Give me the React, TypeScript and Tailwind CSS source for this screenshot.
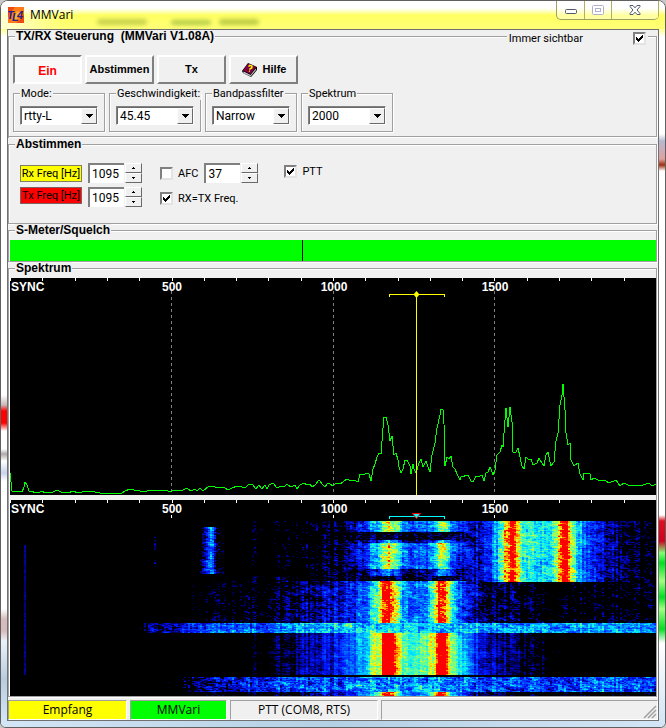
import { useEffect, useRef, useState } from "react";
import type { ReactNode } from "react";

type Profile = [number, number][];

interface Segment {
  from: number;
  to: number;
  noise: number;
  profile: Profile;
}

const PLOT_WIDTH = 646;
const FALL_HEIGHT = 175;

const spectrumPoints =
  "0,195 2,213 7,213 12,214 14,209 15,204 17,207 19,213 28,215 32,213 35,215 43,214 47,212 51,214 57,215 64,213 67,215 72,214 81,213 85,214 90,215 112,215 115,213 120,211 124,212 130,213 134,214 140,212 147,212 150,213 155,212 158,213 162,213 165,212 168,213 173,212 177,210 181,213 185,211 187,213 190,210 193,213 199,208 205,209 212,209 215,210 218,212 222,210 227,208 232,209 235,210 238,207 242,206 246,211 249,207 252,211 255,207 257,211 259,207 263,205 267,210 271,208 275,208 277,206 281,209 285,207 287,211 290,207 294,205 297,207 300,206 302,209 305,207 309,202 313,207 315,209 318,205 320,206 323,208 326,205 330,206 337,201 341,203 344,202 348,204 350,196 354,197 356,195 359,196 361,203 363,191 365,186 367,179 369,175 371,176 373,150 373,139 376,139 378,147 380,163 382,158 384,177 386,175 388,182 389,189 391,195 393,191 395,182 397,182 400,188 401,196 403,186 404,191 406,195 409,185 411,181 413,189 416,183 418,189 420,194 422,177 425,165 427,150 430,137 431,131 433,132 434,146 435,188 437,179 439,181 441,178 443,189 445,191 447,196 450,202 451,199 458,197 461,203 463,204 466,198 468,199 472,197 474,203 476,195 478,194 480,189 481,191 483,197 485,192 487,177 490,174 492,167 493,169 495,142 496,130 498,149 500,129 502,144 503,174 506,174 508,170 510,179 512,188 514,191 516,179 519,182 521,181 523,187 527,185 529,180 532,185 534,188 536,177 538,174 540,184 541,188 544,184 546,163 548,155 550,127 552,117 553,106 555,132 556,155 558,167 560,165 561,182 564,188 568,185 570,196 573,202 574,195 580,196 581,202 584,200 590,203 595,202 599,205 606,202 610,208 614,205 618,207 633,207 639,205 642,208 646,206";

const idle: Profile = [[240, 0], [300, 0.04], [350, 0.08], [400, 0.1], [450, 0.14], [475, 0.16], [485, 0]];
const weakPair: Profile = [[240, 0], [290, 0.04], [330, 0.1], [350, 0.26], [362, 0.45], [370, 0.66], [376, 0.82], [382, 0.74], [392, 0.5], [400, 0.4], [410, 0.42], [420, 0.46], [426, 0.68], [431, 0.86], [435, 0.74], [440, 0.5], [447, 0.36], [455, 0.25], [475, 0.25], [485, 0]];
const fadingPair: Profile = [[300, 0.05], [350, 0.14], [367, 0.3], [376, 0.5], [385, 0.35], [400, 0.16], [420, 0.2], [427, 0.4], [431, 0.62], [436, 0.45], [445, 0.2], [475, 0.16], [485, 0]];
const strongPair: Profile = [[180, 0], [240, 0.06], [290, 0.13], [310, 0.21], [330, 0.27], [345, 0.3], [355, 0.43], [363, 0.62], [369, 0.84], [373, 1.02], [378, 1.02], [384, 0.84], [390, 0.58], [400, 0.46], [412, 0.42], [420, 0.62], [424, 0.8], [428, 1.02], [433, 1.02], [438, 0.78], [445, 0.5], [455, 0.28], [470, 0.18], [495, 0.13], [515, 0.05], [646, 0.04]];
const sustainedPair: Profile = [[240, 0.03], [275, 0.11], [290, 0.2], [320, 0.28], [340, 0.4], [355, 0.54], [363, 0.74], [370, 0.84], [373, 1.1], [381, 1.1], [386, 0.8], [395, 0.66], [405, 0.67], [418, 0.73], [424, 0.86], [427, 1.1], [434, 1.1], [438, 0.82], [446, 0.64], [455, 0.48], [465, 0.34], [480, 0.24], [500, 0.15], [520, 0.09], [545, 0.04], [565, 0], [646, 0]];
const upperBand: Profile = [[125, 0], [140, 0.12], [165, 0.26], [200, 0.38], [260, 0.45], [300, 0.54], [370, 0.57], [470, 0.5], [646, 0.45]];
const lowerBand: Profile = [[155, 0], [170, 0.06], [200, 0.2], [260, 0.36], [330, 0.4], [370, 0.5], [430, 0.5], [470, 0.38], [560, 0.37], [580, 0.44], [646, 0.35]];
const rightPair: Profile = [[450, 0.1], [468, 0.26], [480, 0.38], [487, 0.54], [491, 0.7], [496, 0.88], [499, 0.96], [503, 0.96], [507, 0.8], [514, 0.62], [530, 0.58], [540, 0.62], [546, 0.76], [550, 0.95], [553, 1.06], [557, 1], [561, 0.74], [568, 0.54], [574, 0.42], [582, 0.31], [595, 0.22], [610, 0.12], [625, 0.09], [646, 0.03]];

const segments: Segment[] = [
  { from: 0, to: 11, noise: 0.24, profile: weakPair },
  { from: 11, to: 19, noise: 0.24, profile: idle },
  { from: 19, to: 22, noise: 0.24, profile: fadingPair },
  { from: 22, to: 48, noise: 0.24, profile: weakPair },
  { from: 48, to: 55, noise: 0.24, profile: fadingPair },
  { from: 55, to: 60, noise: 0.24, profile: idle },
  { from: 0, to: 61, noise: 0.22, profile: rightPair },
  { from: 60, to: 102, noise: 0.24, profile: strongPair },
  { from: 102, to: 112, noise: 0.26, profile: upperBand },
  { from: 112, to: 154, noise: 0.15, profile: sustainedPair },
  { from: 156, to: 171, noise: 0.32, profile: lowerBand },
  { from: 171, to: 175, noise: 0.2, profile: strongPair },
  { from: 6, to: 53, noise: 0.26, profile: [[189, 0], [192, 0.2], [196, 0.3], [200, 0.48], [203, 0.3], [205, 0.05], [213, 0.04], [214, 0]] },
  { from: 12, to: 46, noise: 0.3, profile: [[142, 0], [143, 0.1], [145, 0]] },
  { from: 24, to: 154, noise: 0.05, profile: [[13, 0], [14, 0.17], [15, 0.17], [16, 0]] },
];

const heatStops: [number, number[]][] = [
  [0.08, [0, 0, 0]],
  [0.18, [0, 0, 130]],
  [0.3, [0, 20, 255]],
  [0.44, [0, 110, 255]],
  [0.58, [0, 235, 255]],
  [0.7, [110, 255, 140]],
  [0.82, [255, 250, 0]],
  [0.91, [255, 140, 0]],
  [0.96, [255, 0, 0]],
];

function heat(v: number): number[] {
  if (v <= heatStops[0][0]) return heatStops[0][1];
  for (let i = 1; i < heatStops.length; i++) {
    const [end, color] = heatStops[i];
    const [start, prev] = heatStops[i - 1];
    if (v <= end) {
      const t = (v - start) / (end - start);
      return color.map((c, k) => Math.round(prev[k] + (c - prev[k]) * t));
    }
  }
  return heatStops[heatStops.length - 1][1];
}

function sample(profile: Profile, x: number): number {
  if (x < profile[0][0] || x > profile[profile.length - 1][0]) return 0;
  for (let i = 1; i < profile.length; i++) {
    const [x1, v1] = profile[i];
    const [x0, v0] = profile[i - 1];
    if (x <= x1) return v0 + ((v1 - v0) * (x - x0)) / (x1 - x0);
  }
  return 0;
}

function Waterfall() {
  const ref = useRef<HTMLCanvasElement>(null);

  useEffect(() => {
    const ctx = ref.current?.getContext("2d");
    if (!ctx) return;
    let seed = 4711;
    const rnd = () => {
      seed = (seed * 1664525 + 1013904223) >>> 0;
      return seed / 4294967296 - 0.5;
    };
    const columnGain = Array.from({ length: PLOT_WIDTH }, () => rnd() * 0.13);
    const above = Array.from({ length: PLOT_WIDTH }, () => 0);
    ctx.fillStyle = "#000";
    ctx.fillRect(0, 0, PLOT_WIDTH, FALL_HEIGHT);
    for (let y = 0; y < FALL_HEIGHT; y++) {
      const rowGain = rnd() * 0.05;
      let left = 0;
      for (let x = 0; x < PLOT_WIDTH; x += 2) {
        // neighbouring bins share part of their noise
        const n = rnd() + left * 0.35 + above[x] * 0.35;
        left = n;
        above[x] = n;
        let best = 0;
        for (const s of segments) {
          if (y < s.from || y >= s.to) continue;
          const base = sample(s.profile, x);
          if (base <= 0) continue;
          const v = base + n * s.noise * 0.8 + columnGain[x] + rowGain;
          if (v > best) best = v;
        }
        const [r, g, b] = heat(best);
        ctx.fillStyle = `rgb(${r},${g},${b})`;
        ctx.fillRect(x, y, 2, 1);
      }
    }
  }, []);

  return <canvas ref={ref} width={PLOT_WIDTH} height={FALL_HEIGHT} className="block w-full" />;
}

function Scale() {
  const ticks = Array.from({ length: 20 }, (_, i) => Math.round(i * 32.3));
  return (
    <g>
      {ticks.map((x) => (
        <rect key={x} x={x} y="0" width="1" height="3" fill="#fff" />
      ))}
      <g fill="#fff" fontSize="12" fontWeight="bold" fontFamily="'Liberation Sans', Arial, sans-serif">
        <text x="1" y="13">SYNC</text>
        <text x="162" y="13" textAnchor="middle">500</text>
        <text x="324" y="13" textAnchor="middle">1000</text>
        <text x="485" y="13" textAnchor="middle">1500</text>
      </g>
    </g>
  );
}

function SpectrumPlot() {
  return (
    <svg viewBox="0 0 646 217" className="block w-full bg-black">
      <Scale />
      <g stroke="#808080" strokeDasharray="3 3" shapeRendering="crispEdges">
        <path d="M161.5 13V214" />
        <path d="M323.5 13V214" />
        <path d="M484.5 13V214" />
      </g>
      <polyline points={spectrumPoints} fill="none" stroke="#00ff00" shapeRendering="crispEdges" />
      <g stroke="#ffff00" fill="none" shapeRendering="crispEdges">
        <path d="M379.5 19V16.5H434.5V19" />
        <path d="M406.5 14V217" />
      </g>
      <path d="M406.5 13l3 3.5l-3 3.5l-3-3.5z" fill="#ffff00" />
    </svg>
  );
}

function WaterfallScale() {
  return (
    <svg viewBox="0 0 646 21" className="block w-full bg-black">
      <Scale />
      <path d="M161.5 15v3M323.5 15v3M484.5 15v3" stroke="#fff" shapeRendering="crispEdges" />
      <path d="M379.5 19V16.5H434.5V19" fill="none" stroke="#00ffff" shapeRendering="crispEdges" />
      <path d="M402.500 13.500h8l-4 5z" fill="#00ffff" stroke="#ff0000" />
    </svg>
  );
}

function Group({ title, className, children }: { title: string; className: string; children: ReactNode }) {
  return (
    <fieldset className="relative mr-px min-w-0 border border-[#a0a0a0] shadow-[1px_1px_0_#fff,inset_1px_1px_0_#fff]">
      <legend className="ml-[6px] whitespace-pre bg-[#f0f0f0] px-px font-['Liberation_Sans',Arial,sans-serif] text-[12px] font-bold leading-[13px]">
        {title}
      </legend>
      <div className={className}>{children}</div>
    </fieldset>
  );
}

function Combo({ label, options }: { label: string; options: string[] }) {
  return (
    <fieldset className="w-[92px] min-w-0 border border-[#a0a0a0] shadow-[1px_1px_0_#fff,inset_1px_1px_0_#fff]">
      <legend className="ml-[6px] whitespace-nowrap bg-[#f0f0f0] px-px leading-[13px]">{label}</legend>
      <div className="relative m-[6px] h-[19px] border border-b-white border-l-[#808080] border-r-white border-t-[#808080] bg-white">
        <select
          aria-label={label}
          className="block h-full w-full appearance-none border-l border-t border-[#696969] bg-white pl-[2px] text-[12px] leading-[14px] outline-none"
        >
          {options.map((o) => (
            <option key={o}>{o}</option>
          ))}
        </select>
        <span className="pointer-events-none absolute bottom-0 right-0 top-px flex w-4 items-center justify-center border border-b-[#696969] border-l-white border-r-[#696969] border-t-white bg-[#f0f0f0]">
          <svg width="7" height="4" shapeRendering="crispEdges">
            <path d="M0 0h7L3.500 4z" />
          </svg>
        </span>
      </div>
    </fieldset>
  );
}

function Spinner({ label, initial }: { label: string; initial: number }) {
  const [value, setValue] = useState(initial);
  const step =
    "flex h-[10px] w-[17px] items-center justify-center border border-b-[#696969] border-l-white border-r-[#696969] border-t-white bg-[#f0f0f0]";
  return (
    <div className="flex h-5 gap-px">
      <input
        aria-label={label}
        value={value}
        onChange={(e) => setValue(Number(e.target.value) || 0)}
        className="h-5 w-9 border-l-2 border-t-2 border-[#808080] bg-white pl-[2px] text-[12px] leading-[14px] outline-none"
      />
      <div className="flex flex-col">
        <button type="button" aria-label={`${label} +`} onClick={() => setValue(value + 1)} className={step}>
          <svg width="3" height="2" shapeRendering="crispEdges">
            <path d="M1 0h1v1h1v1H0V1h1z" />
          </svg>
        </button>
        <button type="button" aria-label={`${label} -`} onClick={() => setValue(value - 1)} className={step}>
          <svg width="3" height="2" shapeRendering="crispEdges">
            <path d="M0 0h3v1H2v1H1V1H0z" />
          </svg>
        </button>
      </div>
    </div>
  );
}

function Check({ label, checked, reversed }: { label: string; checked?: boolean; reversed?: boolean }) {
  return (
    <label className={`flex items-center whitespace-nowrap leading-[13px] ${reversed ? "flex-row-reverse gap-[50px]" : "gap-[5px]"}`}>
      <span className="relative block h-[13px] w-[13px]">
        <input
          type="checkbox"
          defaultChecked={checked}
          className="peer block h-[13px] w-[13px] appearance-none border-2 border-b-[#e3e3e3] border-l-[#808080] border-r-[#e3e3e3] border-t-[#808080] bg-white"
        />
        <svg
          viewBox="0 0 13 13"
          className="pointer-events-none absolute inset-0 hidden peer-checked:block"
          shapeRendering="crispEdges"
        >
          <path d="M3 5h1v1h1v1h1V6h1V5h1V4h1V3h1v3H9v1H8v1H7v1H6v1H5V9H4V8H3z" />
        </svg>
      </span>
      {label}
    </label>
  );
}

function HelpBook() {
  return (
    <svg width="17" height="16" viewBox="0 0 17 16">
      <path d="M1 9L7 1l9 4v3l-6 7-8-4z" fill="#000" />
      <path d="M2 8.500L7.200 1.500 15 5l-5.500 7z" fill="#800040" />
      <path d="M2.500 9.500l7 3.600L15 6.600v1.200L9.700 14.200 2.500 11z" fill="#fff" />
      <path d="M3 10.700l6.500 3 5.500-6.500" fill="none" stroke="#808080" strokeWidth="0.6" />
      <path d="M7.500 4.500l1.500-1.200 2 .8-.3 1.800-1.600.8-.5 1M8 9l.8.400" fill="none" stroke="#ffff00" strokeWidth="1.500" />
    </svg>
  );
}

function TitleBar() {
  const caption = "flex h-[18px] items-center justify-center border-r border-[#b0b060]";
  return (
    <header className="relative flex h-7 items-start overflow-hidden bg-linear-to-b from-white from-25% via-[#ffff60] via-50% to-[#ffff78]">
      <div className="absolute inset-y-0 left-0 w-16 bg-linear-to-r from-white/70 to-transparent" />
      <div className="absolute left-[96px] top-[18px] h-[6px] w-[50px] rounded-full bg-[#c8d24c] blur-[2px]" />
      <div className="absolute left-[170px] top-[19px] h-[5px] w-[40px] rounded-full bg-[#b4cc48] blur-[2px]" />
      <div className="absolute left-[218px] top-[18px] h-[6px] w-[40px] rounded-full bg-[#bccc44] blur-[2px]" />
      <div className="relative flex flex-1 items-center gap-[6px] pl-[7px] pt-[6px]">
        <svg width="16" height="16" viewBox="0 0 16 16">
          <rect width="16" height="16" fill="#ff7a18" />
          <path d="M0 0h7l-4 5-3 6zM16 16H8l5-4 3-5z" fill="#f04a10" />
          <path d="M5 12l4-8 3 1-3 8z" fill="#ffb030" />
          <g fontSize="11" fontWeight="bold" fontStyle="italic" fill="#22228c" fontFamily="'Liberation Sans', sans-serif">
            <text x="-1" y="12">T</text>
            <text x="4" y="14">L</text>
            <text x="9" y="12">4</text>
          </g>
        </svg>
        <h1 className="font-['Open_Sans','Noto_Sans',sans-serif] text-[12px] leading-4">MMVari</h1>
      </div>
      <div className="relative mr-[6px] flex overflow-hidden rounded-b-[5px] border-b border-l border-[#a0a060] bg-white/40">
        <button type="button" aria-label="Minimieren" className={`${caption} w-7`}>
          <svg width="12" height="6" className="mt-[4px]">
            <rect x="0.500" y="0.500" width="11" height="4" rx="1" fill="#fff" stroke="#505868" />
          </svg>
        </button>
        <button type="button" aria-label="Maximieren" disabled className={`${caption} w-[27px]`}>
          <svg width="12" height="10">
            <rect x="0.500" y="0.500" width="11" height="9" rx="1" fill="#fff" stroke="#b0b0c8" />
            <rect x="3.500" y="3.500" width="5" height="3" fill="#fff" stroke="#b0b0c8" />
          </svg>
        </button>
        <button type="button" aria-label="Schließen" className={`${caption} w-[47px]`}>
          <svg width="12" height="10">
            <path d="M1 .5h3l2 2.300 2-2.300h3v1L8 5l3 3.500v1H8L6 7.200 4 9.500H1v-1L4 5 1 1.500z" fill="#fff" stroke="#505868" />
          </svg>
        </button>
      </div>
    </header>
  );
}

export default function App() {
  const push =
    "flex h-[29px] w-[69px] items-center justify-center border-2 border-b-[#808080] border-l-white border-r-[#808080] border-t-white bg-[#f0f0f0] font-['Liberation_Sans',Arial,sans-serif] text-[11px] font-bold";
  const pane = "flex h-5 items-center justify-center border border-b-white border-l-[#a0a0a0] border-r-white border-t-[#a0a0a0]";
  return (
    <div className="bg-[#c8c8c8]">
      <div className="overflow-hidden rounded-b-[6px] rounded-t-[8px] border border-[#606060] bg-white font-[Roboto,'Liberation_Sans',sans-serif] text-[11px] text-black">
        <TitleBar />
        <div className="flex">
          <div className="w-[6px] shrink-0 bg-[linear-gradient(#ffff90_0px,#fff_8px,#fff_366px,#c8b8b8_376px,#f00_382px,#f00_394px,#fff_402px,#fff_420px,#b0a8a8_425px,#fff_432px,#c8d4ec_444px,#fff_452px,#fff_580px,#d8bcbc_590px,#d8bcbc_602px,#eaf2fa_612px,#b8cce0_650px,#d4e6f6_692px)]" />
          <main className="min-w-0 flex-1 border border-[#707070] bg-[#f0f0f0]">
            <div className="border-b border-[#a0a0a0]">
              <Group title="TX/RX Steuerung  (MMVari V1.08A)" className="px-1 pb-1">
                <div className="absolute -top-[11px] right-2 bg-[#f0f0f0] px-[2px]">
                  <Check label="Immer sichtbar" checked reversed />
                </div>
                <div className="flex gap-[3px] pt-3">
                  <button
                    type="button"
                    aria-pressed="true"
                    className="flex h-[29px] w-[69px] items-center justify-center border-2 border-b-white border-l-[#808080] border-r-white border-t-[#808080] bg-[#f8f8f8] pt-[2px] font-['Liberation_Sans',Arial,sans-serif] text-[12px] font-bold text-[#ff0000]"
                  >
                    Ein
                  </button>
                  <button type="button" className={push}>Abstimmen</button>
                  <button type="button" className={push}>Tx</button>
                  <button type="button" className={`${push} gap-[5px]`}>
                    <HelpBook />
                    Hilfe
                  </button>
                </div>
                <div className="flex gap-1 pt-[3px]">
                  <Combo label="Mode:" options={["rtty-L", "rtty-U", "bpsk"]} />
                  <Combo label="Geschwindigkeit:" options={["45.45", "50", "75"]} />
                  <Combo label="Bandpassfilter" options={["Narrow", "Wide"]} />
                  <Combo label="Spektrum" options={["2000", "3000", "4000"]} />
                </div>
              </Group>
            </div>
            <Group title="Abstimmen" className="pb-4 pl-[11px] pt-3">
              <div className="flex">
                <div className="mr-[6px] flex w-[62px] flex-col gap-[5px] pt-[2px]">
                  <button type="button" className="h-[17px] whitespace-nowrap border border-[#808060] bg-[#ffff00] leading-[15px]">
                    Rx Freq [Hz]
                  </button>
                  <button type="button" className="h-[17px] whitespace-nowrap border border-[#806060] bg-[#ff0000] leading-[15px]">
                    Tx Freq [Hz]
                  </button>
                </div>
                <div className="mr-[18px] flex flex-col gap-1">
                  <Spinner label="Rx Freq [Hz]" initial={1095} />
                  <Spinner label="Tx Freq [Hz]" initial={1095} />
                </div>
                <div className="mr-[26px] flex flex-col gap-[9px]">
                  <div className="flex items-center justify-between gap-[6px]">
                    <Check label="AFC" />
                    <Spinner label="AFC" initial={37} />
                  </div>
                  <Check label="RX=TX Freq." checked />
                </div>
                <div className="pt-[2px]">
                  <Check label="PTT" checked />
                </div>
              </div>
            </Group>
            <Group title="S-Meter/Squelch" className="pl-px pt-[3px]">
              <input
                type="range"
                aria-label="S-Meter/Squelch"
                min={0}
                max={645}
                defaultValue={292}
                className="block h-[21px] w-full appearance-none bg-[#00ff00] [&::-webkit-slider-thumb]:h-[21px] [&::-webkit-slider-thumb]:w-px [&::-webkit-slider-thumb]:appearance-none [&::-webkit-slider-thumb]:bg-black"
              />
            </Group>
            <Group title="Spektrum" className="pl-px pt-[3px]">
              <div className="flex flex-col gap-[5px]">
                <SpectrumPlot />
                <div>
                  <WaterfallScale />
                  <Waterfall />
                </div>
              </div>
            </Group>
            <footer className="flex gap-[3px] pt-[3px] font-['Open_Sans','Noto_Sans',sans-serif] text-[12px] leading-4">
              <div className={`${pane} w-[119px] bg-[#ffff00]`}>Empfang</div>
              <div className={`${pane} w-[97px] bg-[#00ff00]`}>MMVari</div>
              <div className={`${pane} w-[148px]`}>PTT (COM8, RTS)</div>
              <div className={`${pane} flex-1 items-end! justify-end!`}>
                <svg width="14" height="14" stroke="#a0a0a0" strokeWidth="1.500">
                  <path d="M1 13L13 1M5 13l8-8M9 13l4-4" />
                </svg>
              </div>
            </footer>
          </main>
          <div className="w-[6px] shrink-0 bg-[linear-gradient(#ffff90_0px,#fff_8px,#fff_105px,#b8b8d0_112px,#e0a0a0_130px,#a03010_136px,#fff_142px,#fff_486px,#e01020_492px,#d00020_512px,#80ff70_524px,#00e020_534px,#a0ff80_552px,#00e020_568px,#a0ff80_580px,#00e020_600px,#fff_614px,#eaf2fa_650px,#d4e6f6_692px)]" />
        </div>
        <div className="h-[6px] bg-linear-to-r from-[#d4e6f6] via-[#b4d0e4] to-[#d4e6f6]" />
      </div>
    </div>
  );
}
